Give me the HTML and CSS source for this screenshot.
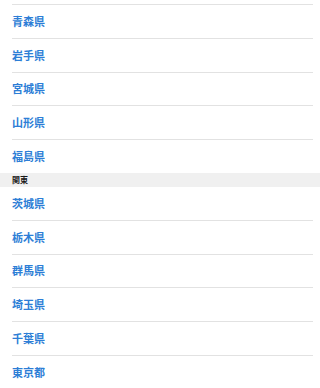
FILE: index.html
```html
<!DOCTYPE html>
<html lang="ja">
<head>
<meta charset="utf-8">
<link rel="stylesheet" href="styles.css">
</head>
<body>
<div class="list">
  <div class="row partial"></div>
  <div class="row"><span class="label">青森県</span></div>
  <div class="row"><span class="label">岩手県</span></div>
  <div class="row"><span class="label">宮城県</span></div>
  <div class="row"><span class="label">山形県</span></div>
  <div class="row last"><span class="label">福島県</span></div>
  <div class="header">関東</div>
  <div class="row"><span class="label">茨城県</span></div>
  <div class="row"><span class="label">栃木県</span></div>
  <div class="row"><span class="label">群馬県</span></div>
  <div class="row"><span class="label">埼玉県</span></div>
  <div class="row"><span class="label">千葉県</span></div>
  <div class="row last"><span class="label">東京都</span></div>
</div>
</body>
</html>
```
FILE: styles.css
```css
html, body {
  margin: 0;
  padding: 0;
  background: #ffffff;
}
body {
  font-family: "Noto Sans CJK JP", "Noto Sans", sans-serif;
  overflow: hidden;
}
.list {
  display: flex;
  flex-direction: column;
}
.row {
  box-sizing: content-box;
  height: 32.8px;
  margin: 0 7px 0 12px;
  border-bottom: 1px solid #e2e2e2;
  display: flex;
  align-items: center;
}
.row.partial {
  height: 4px;
}
.row.last {
  border-bottom: none;
}
.label {
  color: #2d7ed6;
  font-size: 11px;
  font-weight: 700;
  line-height: 1;
}
.header {
  height: 14px;
  background: #f0f0f0;
  padding-left: 12px;
  display: flex;
  align-items: center;
  font-size: 8px;
  font-weight: 700;
  color: #1a1a1a;
  line-height: 1;
}
```
